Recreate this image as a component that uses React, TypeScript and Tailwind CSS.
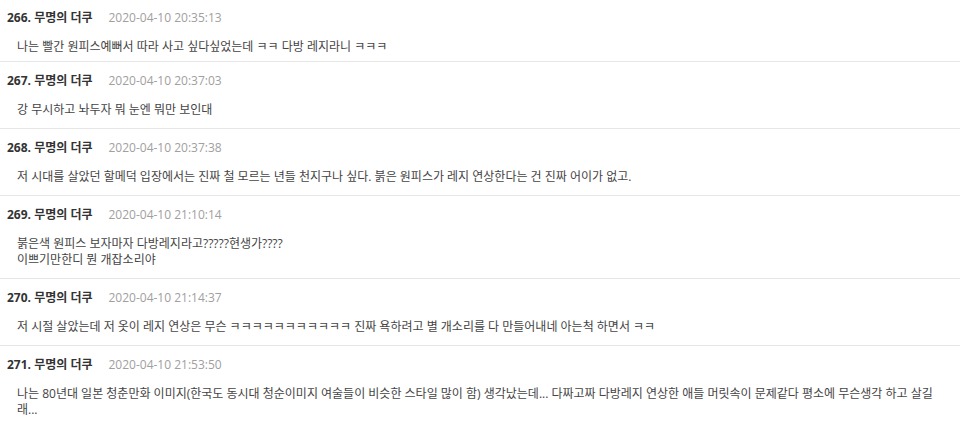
import React from "react";

interface Comment {
  no: number;
  name: string;
  date: string;
  lines: string[];
}

const comments: Comment[] = [
  {
    no: 266,
    name: "무명의 더쿠",
    date: "2020-04-10 20:35:13",
    lines: ["나는 빨간 원피스예뻐서 따라 사고 싶다싶었는데 ㅋㅋ 다방 레지라니 ㅋㅋㅋ"],
  },
  {
    no: 267,
    name: "무명의 더쿠",
    date: "2020-04-10 20:37:03",
    lines: ["강 무시하고 놔두자 뭐 눈엔 뭐만 보인대"],
  },
  {
    no: 268,
    name: "무명의 더쿠",
    date: "2020-04-10 20:37:38",
    lines: [
      "저 시대를 살았던 할메덕 입장에서는 진짜 철 모르는 년들 천지구나 싶다. 붉은 원피스가 레지 연상한다는 건 진짜 어이가 없고.",
    ],
  },
  {
    no: 269,
    name: "무명의 더쿠",
    date: "2020-04-10 21:10:14",
    lines: ["붉은색 원피스 보자마자 다방레지라고?????현생가????", "이쁘기만한디 뭔 개잡소리야"],
  },
  {
    no: 270,
    name: "무명의 더쿠",
    date: "2020-04-10 21:14:37",
    lines: [
      "저 시절 살았는데 저 옷이 레지 연상은 무슨 ㅋㅋㅋㅋㅋㅋㅋㅋㅋㅋㅋ 진짜 욕하려고 별 개소리를 다 만들어내네 아는척 하면서 ㅋㅋ",
    ],
  },
  {
    no: 271,
    name: "무명의 더쿠",
    date: "2020-04-10 21:53:50",
    lines: [
      "나는 80년대 일본 청춘만화 이미지(한국도 동시대 청순이미지 여술들이 비슷한 스타일 많이 함) 생각났는데... 다짜고짜 다방레지 연상한 애들 머릿속이 문제같다 평소에 무슨생각 하고 살길래...",
    ],
  },
];

const font = { fontFamily: '"Open Sans", "Noto Sans CJK KR", sans-serif' };

export default function App() {
  return (
    <div className="w-[960px] h-[425px] overflow-hidden bg-white" style={font}>
      {comments.map((c, i) => (
        <div
          key={c.no}
          className={`border-b border-[#e6e6e6] pl-[7px] pr-[16px] ${
            i === 0 ? "pt-[10px] pb-[6px]" : "pt-[11px] pb-[10px]"
          }`}
        >
          <div className="flex items-center h-[16px] text-[12px] leading-[16px]">
            <span className="font-bold text-[#333333]">
              {c.no}. {c.name}
            </span>
            <span className="ml-[16px] text-[#a0a0a0]">{c.date}</span>
          </div>
          <div className="mt-[13px] pl-[10px] text-[12px] leading-[16px] text-[#444444]">
            {c.lines.map((l, j) => (
              <p key={j}>{l}</p>
            ))}
          </div>
        </div>
      ))}
    </div>
  );
}
